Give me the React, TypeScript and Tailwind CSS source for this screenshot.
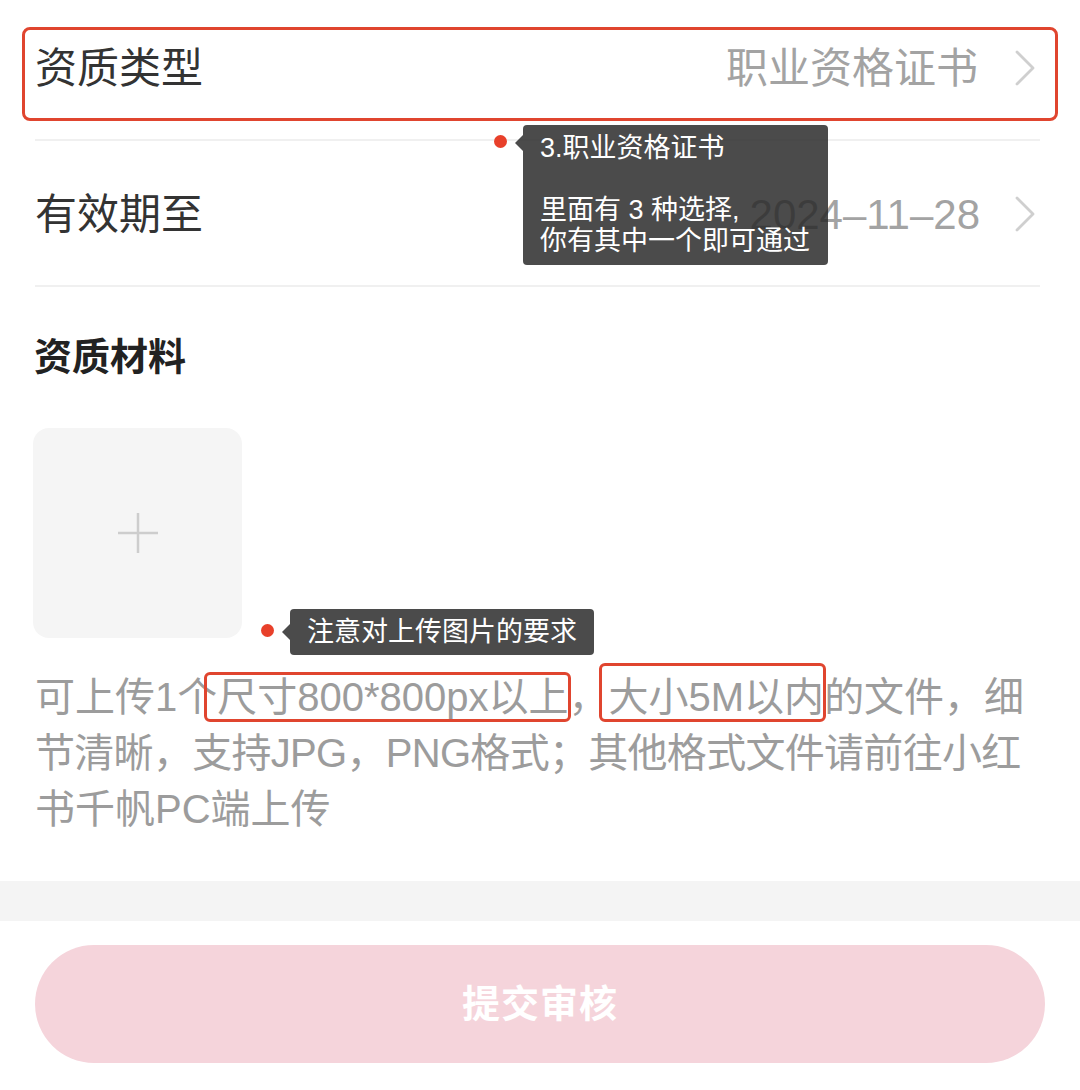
import React from 'react';

const font = { fontFamily: '"Liberation Sans", "Noto Sans CJK SC", sans-serif' };

const Chevron = () => (
  <svg width="22" height="38" viewBox="0 0 22 38" fill="none">
    <polyline points="3,3 19,19 3,35" stroke="#cfcfcf" strokeWidth="2.8" strokeLinecap="round" strokeLinejoin="round" />
  </svg>
);

// annotation tooltip with a red dot on its left
const Tip = ({ className, arrowClass, children }: { className: string; arrowClass: string; children: React.ReactNode }) => (
  <div className={`absolute flex ${className}`}>
    <div className={`absolute -left-[29px] w-[13px] h-[13px] rounded-full bg-[#e8402a] ${arrowClass}`} />
    <div
      className={`absolute -left-[8px] w-0 h-0 border-y-[8px] border-y-transparent border-r-[8px] border-r-[rgba(40,40,40,0.84)] ${arrowClass}`}
    />
    <div className="rounded-[4px] bg-[rgba(40,40,40,0.84)] text-white text-[27px] leading-[31px]">{children}</div>
  </div>
);

export default function App() {
  return (
    <div className="relative w-[1080px] h-[1090px] bg-white overflow-hidden" style={font}>
      {/* 资质类型 row, framed by annotation box */}
      <div className="mx-[22px] mt-[27px] h-[94px] rounded-[8px] border-[3px] border-[#e0452f] flex items-center pl-[10px] pr-[19px] pb-[12px]">
        <span className="text-[42px] text-[#333]">资质类型</span>
        <span className="ml-auto text-[42px] text-[#a3a3a3]">职业资格证书</span>
        <span className="ml-[36px] flex"><Chevron /></span>
      </div>
      <div className="ml-[35px] mr-[40px] mt-[18px] h-[2px] bg-[#f0f0f0]" />

      <div className="h-[144px] flex items-center pl-[35px] pr-[44px] pt-[2px]">
        <span className="text-[42px] text-[#333]">有效期至</span>
        <span className="ml-auto text-[42px] text-[#a3a3a3]">2024–11–28</span>
        <span className="ml-[34px] flex"><Chevron /></span>
      </div>
      <div className="ml-[35px] mr-[40px] h-[2px] bg-[#f0f0f0]" />

      <div className="pl-[34px] mt-[48px] text-[38px] leading-[44px] font-bold text-[#222]">资质材料</div>

      <div className="ml-[33px] mt-[49px] w-[209px] h-[210px] rounded-[16px] bg-[#f5f5f5] flex items-center justify-center">
        <svg width="40" height="40" viewBox="0 0 40 40">
          <line x1="0" y1="20" x2="40" y2="20" stroke="#cdcdcd" strokeWidth="2.5" />
          <line x1="20" y1="0" x2="20" y2="40" stroke="#cdcdcd" strokeWidth="2.5" />
        </svg>
      </div>

      <div className="pl-[35px] mt-[31px] text-[40px] leading-[56px] text-[#9c9c9c] whitespace-nowrap">
        <div>
          可上传1个
          <span className="relative">
            尺寸800*800px以上
            <span className="absolute -left-[13px] -right-[2px] top-[-3px] bottom-[-3px] border-[3px] border-[#e0452f] rounded-[6px]" />
          </span>
          ，
          <span className="relative">
            大小5M以内
            <span className="absolute -left-[10px] -right-[2px] top-[-12px] bottom-[-3px] border-[3px] border-[#e0452f] rounded-[6px]" />
          </span>
          的文件，细
        </div>
        <div className="tracking-[-0.7px]">节清晰，支持JPG，PNG格式；其他格式文件请前往小红</div>
        <div>书千帆PC端上传</div>
      </div>

      <div className="mt-[44px] h-[40px] bg-[#f4f4f4]" />

      <div className="mx-[35px] mt-[24px] h-[118px] rounded-full bg-[#f5d4db] flex items-center justify-center">
        <span className="text-[38px] font-bold text-white tracking-[1px]">提交审核</span>
      </div>

      <Tip className="left-[523px] top-[125px]" arrowClass="top-[10px]">
        <div className="w-[305px] h-[140px] pl-[17px] pt-[8px]">
          <div>3.职业资格证书</div>
          <div className="h-[31px]" />
          <div>里面有 3 种选择,</div>
          <div>你有其中一个即可通过</div>
        </div>
      </Tip>

      <Tip className="left-[290px] top-[609px]" arrowClass="top-[15px]">
        <div className="w-[304px] h-[46px] pl-[17px] flex items-center">注意对上传图片的要求</div>
      </Tip>
    </div>
  );
}
